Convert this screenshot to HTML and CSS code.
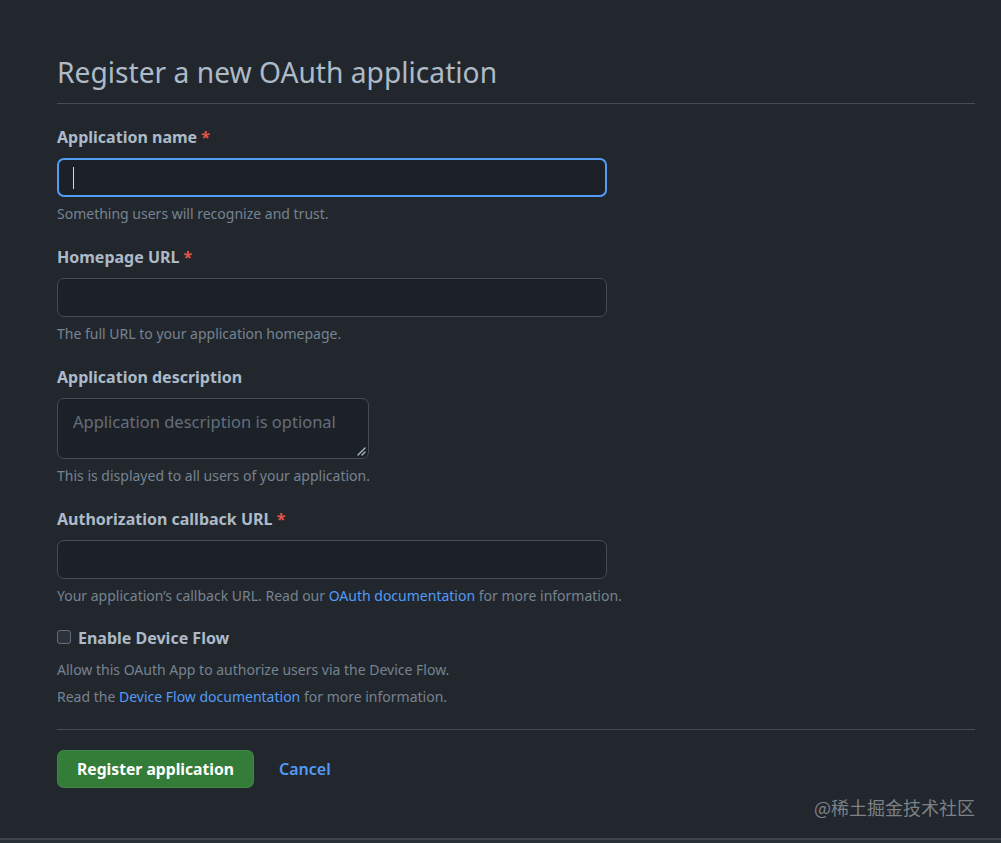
FILE: index.html
```html
<!DOCTYPE html>
<html lang="en">
<head>
<meta charset="utf-8">
<title>Register a new OAuth application</title>
<link rel="stylesheet" href="styles.css">
</head>
<body>
<div class="page">
  <main class="container">
    <div class="subhead">
      <h2 class="subhead-title">Register a new OAuth application</h2>
    </div>
    <form class="form">
      <div class="field">
        <label class="label">Application name <span class="req">*</span></label>
        <div class="input input-focus"><span class="caret"></span></div>
        <p class="note">Something users will recognize and trust.</p>
      </div>
      <div class="field">
        <label class="label">Homepage URL <span class="req">*</span></label>
        <div class="input"></div>
        <p class="note">The full URL to your application homepage.</p>
      </div>
      <div class="field">
        <label class="label">Application description</label>
        <div class="textarea">
          <span class="placeholder">Application description is optional</span>
          <svg class="grip" width="9" height="9" viewBox="0 0 9 9"><path d="M8 1L1 8M8 5L5 8" stroke="#adbac7" stroke-width="1.4" stroke-linecap="round"/></svg>
        </div>
        <p class="note">This is displayed to all users of your application.</p>
      </div>
      <div class="field">
        <label class="label">Authorization callback URL <span class="req">*</span></label>
        <div class="input"></div>
        <p class="note">Your application’s callback URL. Read our <a class="link">OAuth documentation</a> for more information.</p>
      </div>
      <div class="check-row">
        <span class="checkbox"></span>
        <span class="check-label">Enable Device Flow</span>
      </div>
      <p class="note note-first">Allow this OAuth App to authorize users via the Device Flow.</p>
      <p class="note note-second">Read the <a class="link">Device Flow documentation</a> for more information.</p>
      <hr class="divider">
      <div class="actions">
        <button type="button" class="btn-primary">Register application</button>
        <a class="cancel">Cancel</a>
      </div>
    </form>
  </main>
  <div class="watermark">@稀土掘金技术社区</div>
</div>
<div class="footer"></div>
</body>
</html>
```

FILE: styles.css
```css
* { box-sizing: border-box; }
html, body {
  margin: 0;
  padding: 0;
  background: #22272e;
  height: 843px;
  overflow: hidden;
}
body {
  font-family: "Noto Sans", "Segoe UI", sans-serif;
  color: #adbac7;
}
.page {
  position: relative;
  height: 838px;
}
.container {
  padding: 0 26px 0 57px;
}
.subhead {
  padding-top: 52px;
  padding-bottom: 11px;
  border-bottom: 1px solid #444c56;
}
.subhead-title {
  margin: 0;
  font-size: 28.2px;
  font-weight: 400;
  line-height: 40px;
  color: #adbac7;
}
.form { margin: 0; }
.field { margin-top: 22px; }
.label {
  display: block;
  font-size: 16px;
  font-weight: 700;
  line-height: 22px;
  margin-bottom: 10px;
  color: #adbac7;
}
.req { color: #e5534b; }
.input {
  width: 550px;
  height: 39px;
  background: #1c2128;
  border: 1px solid #444c56;
  border-radius: 7px;
  display: flex;
  align-items: center;
  padding-left: 16px;
}
.input-focus {
  border: 2px solid #539bf5;
  padding-left: 14px;
}
.caret {
  width: 1px;
  height: 22px;
  background: #cdd9e5;
}
.textarea {
  position: relative;
  width: 312px;
  height: 61px;
  background: #1c2128;
  border: 1px solid #444c56;
  border-radius: 7px;
  padding: 12px 15px;
}
.placeholder {
  font-size: 16.5px;
  line-height: 22px;
  color: #636e7b;
}
.grip {
  position: absolute;
  right: 2px;
  bottom: 2px;
}
.note {
  margin: 7px 0 0;
  font-size: 14px;
  line-height: 20px;
  color: #768390;
}
.link { color: #539bf5; text-decoration: none; }
.check-row {
  margin-top: 21px;
  display: flex;
  align-items: center;
  height: 22px;
}
.checkbox {
  width: 14px;
  height: 14px;
  border: 1px solid #636e7b;
  border-radius: 3px;
  background: #2d333b;
  margin-right: 7px;
  margin-top: -2px;
}
.check-label {
  font-size: 16px;
  font-weight: 700;
  line-height: 22px;
  color: #adbac7;
}
.note-first { margin-top: 11px; }
.note-second { margin-top: 7px; }
.divider {
  margin: 22px 0 0;
  border: 0;
  border-top: 1px solid #444c56;
  height: 0;
}
.actions {
  margin-top: 20px;
  display: flex;
  align-items: center;
}
.btn-primary {
  height: 38px;
  padding: 0 19px;
  background: #347d39;
  border: 1px solid rgba(205, 217, 229, 0.1);
  border-radius: 7px;
  color: #ffffff;
  font-family: "Noto Sans", "Segoe UI", sans-serif;
  font-size: 15.7px;
  font-weight: 700;
}
.cancel {
  margin-left: 25px;
  font-size: 16px;
  font-weight: 600;
  color: #539bf5;
}
.watermark {
  position: absolute;
  right: 26px;
  top: 795px;
  font-family: "Noto Sans CJK SC", sans-serif;
  font-size: 18px;
  line-height: 24px;
  color: #8c9196;
  opacity: 0.85;
}
.footer {
  height: 5px;
  border-top: 2px solid #3d444d;
  background: #2a3038;
}
```
